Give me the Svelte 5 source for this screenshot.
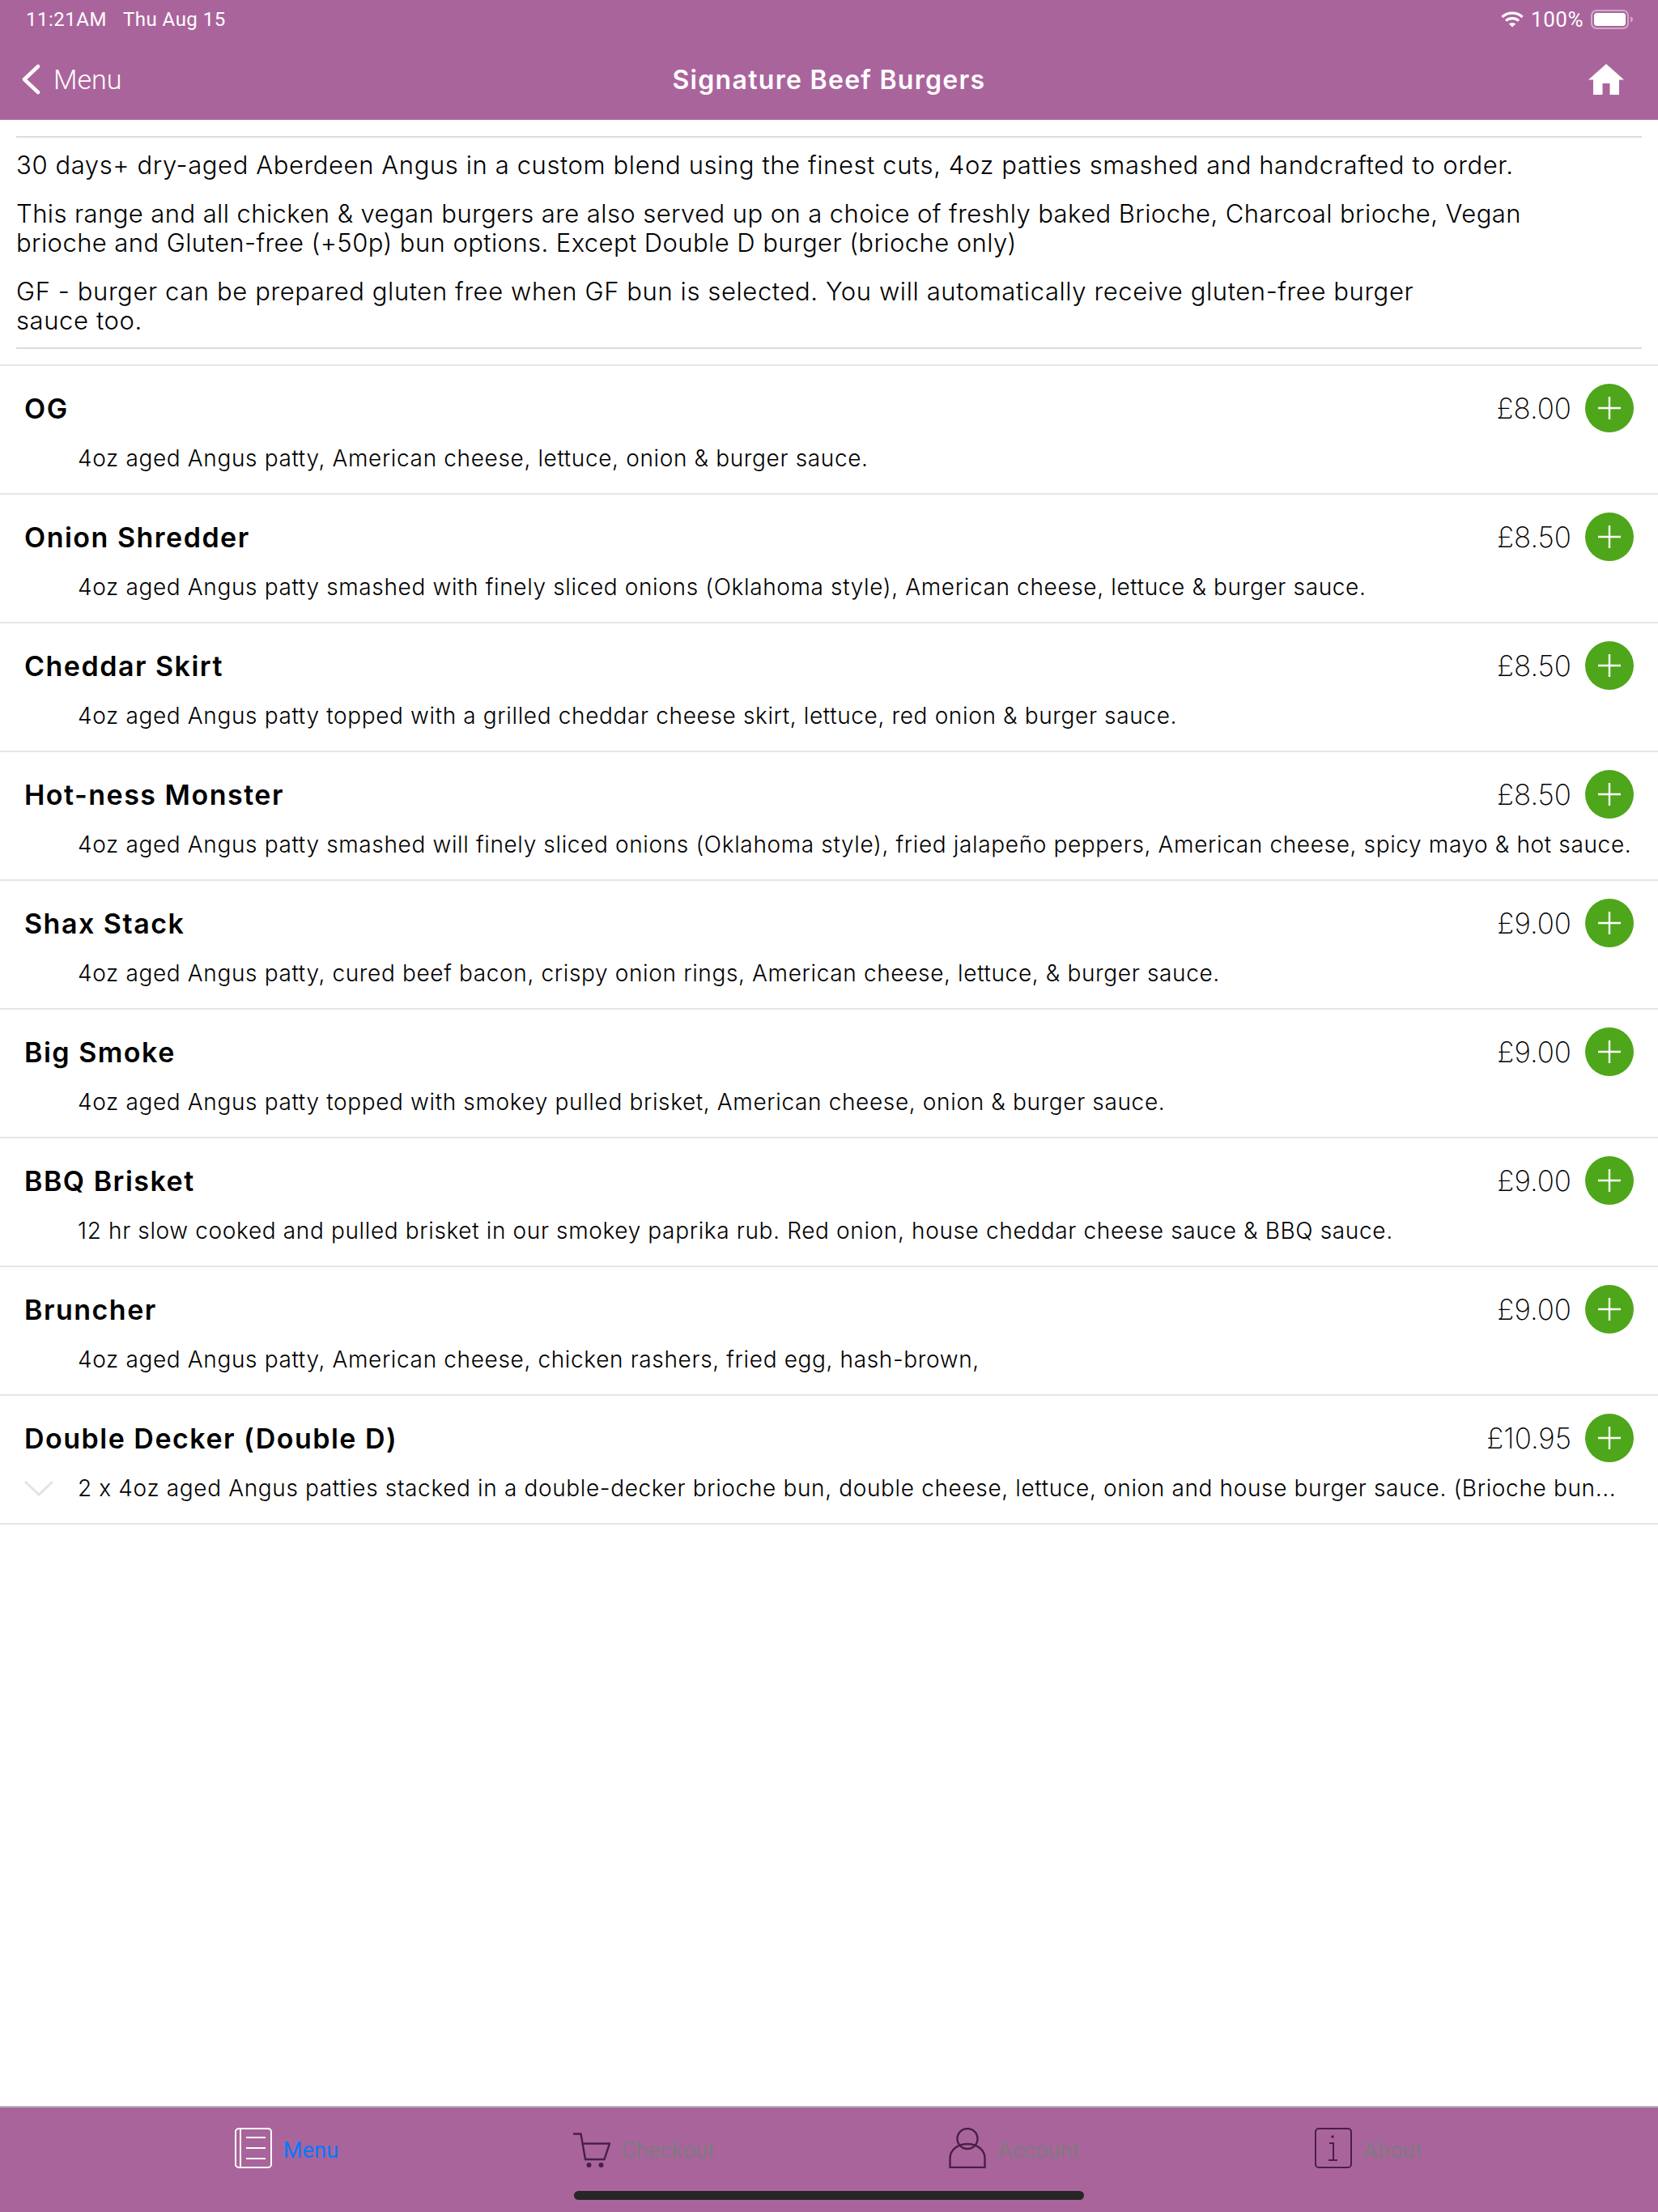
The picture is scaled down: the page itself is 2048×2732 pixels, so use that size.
<script>
  const items = [
    { name: "OG", price: "£8.00", desc: "4oz aged Angus patty, American cheese, lettuce, onion & burger sauce." },
    { name: "Onion Shredder", price: "£8.50", desc: "4oz aged Angus patty smashed with finely sliced onions (Oklahoma style), American cheese, lettuce & burger sauce." },
    { name: "Cheddar Skirt", price: "£8.50", desc: "4oz aged Angus patty topped with a grilled cheddar cheese skirt, lettuce, red onion & burger sauce." },
    { name: "Hot-ness Monster", price: "£8.50", desc: "4oz aged Angus patty smashed will finely sliced onions (Oklahoma style), fried jalapeño peppers, American cheese, spicy mayo & hot sauce." },
    { name: "Shax Stack", price: "£9.00", desc: "4oz aged Angus patty, cured beef bacon, crispy onion rings, American cheese, lettuce, & burger sauce." },
    { name: "Big Smoke", price: "£9.00", desc: "4oz aged Angus patty topped with smokey pulled brisket, American cheese, onion & burger sauce." },
    { name: "BBQ Brisket", price: "£9.00", desc: "12 hr slow cooked and pulled brisket in our smokey paprika rub. Red onion, house cheddar cheese sauce & BBQ sauce." },
    { name: "Bruncher", price: "£9.00", desc: "4oz aged Angus patty, American cheese, chicken rashers, fried egg, hash-brown," },
    { name: "Double Decker (Double D)", price: "£10.95", desc: "2 x 4oz aged Angus patties stacked in a double-decker brioche bun, double cheese, lettuce, onion and house burger sauce. (Brioche bun...", more: true },
  ];
</script>

<div class="page">
  <header class="top">
    <div class="status">
      <div class="clock"><span>11:21AM</span><span>Thu Aug 15</span></div>
      <div class="signal">
        <svg width="28" height="20" viewBox="0 0 28 20" fill="none" stroke="#fff" stroke-width="3.2">
          <path d="M1.5 7 C8.5 0.5 19.5 0.5 26.5 7" />
          <path d="M6 11.6 C10.5 7.6 17.5 7.6 22 11.6" />
          <path d="M14 19.5 L9.8 15.6 C12 13.8 16 13.8 18.2 15.6 Z" fill="#fff" stroke="none" />
        </svg>
        <span>100%</span>
        <svg width="52" height="24" viewBox="0 0 52 24">
          <rect x="1" y="1" width="45" height="22" rx="6" fill="none" stroke="#fff" stroke-opacity="0.45" stroke-width="2" />
          <rect x="4" y="4" width="39" height="16" rx="3.5" fill="#fff" />
          <path d="M49 8.5 C51 9.2 52 10.5 52 12 C52 13.5 51 14.8 49 15.5 Z" fill="#fff" fill-opacity="0.45" />
        </svg>
      </div>
    </div>
    <nav class="navbar">
      <div class="back">
        <svg width="24" height="38" viewBox="0 0 24 38" fill="none" stroke="#fff" stroke-width="4.5" stroke-linecap="round" stroke-linejoin="round">
          <path d="M21 3 L4 19 L21 35" />
        </svg>
        <span>Menu</span>
      </div>
      <h1>Signature Beef Burgers</h1>
      <svg class="home" width="44" height="38" viewBox="0 0 44 38" fill="#fff">
        <path d="M22 0 L44 19.5 L38 19.5 L38 38 L26.5 38 L26.5 24 L17.5 24 L17.5 38 L6 38 L6 19.5 L0 19.5 Z" />
      </svg>
    </nav>
  </header>

  <main class="content">
    <section class="intro">
      <p>30 days+ dry-aged Aberdeen Angus in a custom blend using the finest cuts, 4oz patties smashed and handcrafted to order.</p>
      <p>This range and all chicken &amp; vegan burgers are also served up on a choice of freshly baked Brioche, Charcoal brioche, Vegan<br />brioche and Gluten-free (+50p) bun options. Except Double D burger (brioche only)</p>
      <p>GF - burger can be prepared gluten free when GF bun is selected. You will automatically receive gluten-free burger<br />sauce too.</p>
    </section>

    <ul class="list">
      {#each items as item}
        <li class="row">
          <div class="row-top">
            <span class="name">{item.name}</span>
            <span class="price">{item.price}</span>
            <span class="add">
              <svg width="30" height="30" viewBox="0 0 30 30" stroke="#fff" stroke-width="2.4">
                <path d="M15 1 V29 M1 15 H29" />
              </svg>
            </span>
          </div>
          <div class="row-desc">
            <span class="chevron">
              {#if item.more}
                <svg width="36" height="20" viewBox="0 0 36 20" fill="none" stroke="#e3e3e3" stroke-width="3">
                  <path d="M1 2 L18 18 L35 2" />
                </svg>
              {/if}
            </span>
            <span class="desc">{item.desc}</span>
          </div>
        </li>
      {/each}
    </ul>
  </main>

  <footer class="tabs">
    <div class="tab">
      <svg width="46" height="50" viewBox="0 0 46 50" fill="none" stroke="#fff" stroke-width="2">
        <rect x="1" y="1" width="44" height="48" rx="4" />
        <path d="M7 1 V49 M14 12 H38 M14 25 H38 M14 38 H38" />
      </svg>
      <span class="label active">Menu</span>
    </div>
    <div class="tab">
      <svg width="46" height="44" viewBox="0 0 46 44" fill="none" stroke="#4a1f47" stroke-width="2.4">
        <path d="M0 1.5 H9.5 L15 33 H38.5 L45 13.5 H11.5" />
        <circle cx="19.5" cy="40" r="3" fill="#4a1f47" stroke="none" />
        <circle cx="34.5" cy="40" r="3" fill="#4a1f47" stroke="none" />
      </svg>
      <span class="label">Checkout</span>
    </div>
    <div class="tab">
      <svg width="46" height="50" viewBox="0 0 46 50" fill="none" stroke="#4a1f47" stroke-width="2.4">
        <circle cx="23" cy="13.5" r="12.5" />
        <path d="M1.5 49 V38 C1.5 14 44.5 14 44.5 38 V49 Z" />
      </svg>
      <span class="label">Account</span>
    </div>
    <div class="tab">
      <svg width="46" height="50" viewBox="0 0 46 50" fill="none" stroke="#4a1f47" stroke-width="2">
        <rect x="1" y="1" width="44" height="48" rx="4" />
        <circle cx="22" cy="11" r="1.8" fill="#4a1f47" stroke="none" />
        <path d="M18 19 H23 V40 M17 40 H28" />
      </svg>
      <span class="label">About</span>
    </div>
    <div class="indicator"></div>
  </footer>
</div>

<style>
  :global(body) {
    margin: 0;
    background: #fff;
  }

  .page {
    width: 2048px;
    height: 2732px;
    display: flex;
    flex-direction: column;
    font-family: Inter, "Liberation Sans", sans-serif;
    color: #000;
    font-feature-settings: "calt" 0;
  }

  .top {
    height: 148px;
    background: #aa649c;
    color: #fff;
    font-family: Roboto, "Liberation Sans", sans-serif;
  }

  .status {
    height: 48px;
    display: flex;
    justify-content: space-between;
    align-items: center;
    padding: 0 31px 0 32px;
    font-size: 24px;
    letter-spacing: 0.5px;
  }

  .clock {
    display: flex;
    gap: 20px;
  }

  .signal {
    display: flex;
    align-items: center;
    gap: 9px;
    font-size: 26px;
  }

  .navbar {
    height: 100px;
    display: flex;
    align-items: center;
    justify-content: space-between;
    position: relative;
    padding: 0 42px 0 26px;
  }

  .back {
    display: flex;
    align-items: center;
    gap: 16px;
    font-size: 34px;
    font-weight: 300;
  }

  .navbar h1 {
    position: absolute;
    left: 0;
    right: 0;
    margin: 0;
    text-align: center;
    font-family: Inter, sans-serif;
    font-size: 32px;
    font-weight: 600;
    letter-spacing: 1.3px;
  }

  .home {
    position: relative;
  }

  .content {
    flex: 1;
  }

  .intro {
    margin: 20px 20px 0;
    padding: 16px 0 15px;
    border-top: 2px solid #dcdcdc;
    border-bottom: 2px solid #dcdcdc;
    font-size: 31px;
    font-weight: 300;
    line-height: 36px;
    letter-spacing: 0.6px;
  }

  .intro p {
    margin: 0 0 24px;
    white-space: nowrap;
  }

  .intro p:nth-child(2) {
    letter-spacing: 0.42px;
  }

  .intro p:last-child {
    margin-bottom: 0;
  }

  .list {
    list-style: none;
    margin: 19px 0 0;
    padding: 0;
    border-top: 2px solid #e6e6e6;
  }

  .row {
    box-sizing: border-box;
    height: 159px;
    border-bottom: 2px solid #e6e6e6;
    padding: 22px 30px 0;
  }

  .row-top {
    display: flex;
    align-items: center;
    height: 60px;
  }

  .name {
    flex: 1;
    font-size: 34px;
    font-weight: 600;
    letter-spacing: 1.5px;
  }

  .price {
    margin-right: 17px;
    font-size: 35px;
    font-weight: 200;
  }

  .add {
    width: 60px;
    height: 60px;
    border-radius: 50%;
    background: #4ea61a;
    display: flex;
    align-items: center;
    justify-content: center;
  }

  .row-desc {
    display: flex;
    align-items: center;
    margin-top: 14px;
    height: 36px;
  }

  .chevron {
    width: 66px;
    flex-shrink: 0;
    display: flex;
  }

  .desc {
    flex: 1;
    min-width: 0;
    white-space: nowrap;
    font-size: 28px;
    font-weight: 300;
    letter-spacing: 0.64px;
  }

  .tabs {
    position: relative;
    height: 129px;
    background: #aa649c;
    border-top: 2px solid #b5b5b5;
    display: grid;
    grid-template-columns: 452px 431px 484px 390px;
    padding-left: 128px;
    font-family: Roboto, "Liberation Sans", sans-serif;
  }

  .tab {
    display: flex;
    align-items: flex-end;
    justify-content: center;
    gap: 14px;
    height: 75px;
  }

  .label {
    align-self: center;
    margin-top: 30px;
    font-size: 27px;
    letter-spacing: 0.2px;
    color: #7f7a80;
  }

  .label.active {
    color: #007aff;
  }

  .indicator {
    position: absolute;
    left: 709px;
    width: 630px;
    top: 103px;
    height: 11px;
    border-radius: 6px;
    background: #262626;
  }
</style>
